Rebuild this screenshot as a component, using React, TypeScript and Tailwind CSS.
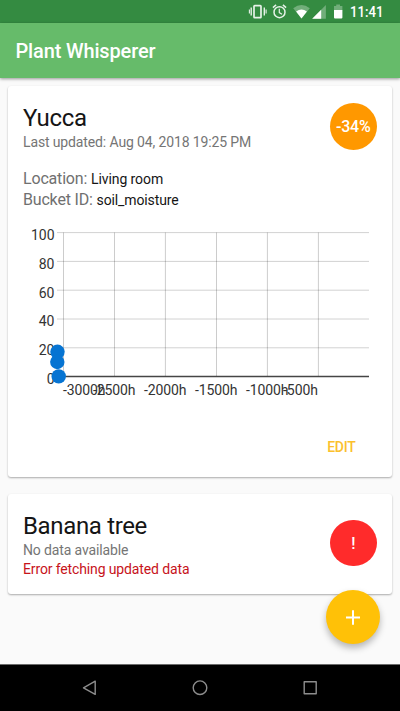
const rows = [
  { label: "100", y: 12.6 },
  { label: "80", y: 41.4 },
  { label: "60", y: 70.2 },
  { label: "40", y: 99 },
  { label: "20", y: 127.8 },
  { label: "0", y: 156.5 },
];
const columns = [
  { label: "-3000h", x: 63.5, start: 63, width: 42.5 },
  { label: "-2500h", x: 114.5, start: 93, width: 42.5 },
  { label: "-2000h", x: 165.4, start: 144, width: 42.5 },
  { label: "-1500h", x: 216.5, start: 195, width: 42.5 },
  { label: "-1000h", x: 267.4, start: 246, width: 42.5 },
  { label: "-500h", x: 318.4, start: 283, width: 35 },
];
const points = [
  { x: 57.5, y: 131.8 },
  { x: 57.3, y: 142 },
  { x: 58.7, y: 156.4 },
];

function MoistureChart() {
  return (
    <svg width="384" height="190" viewBox="8 0 384 190" className="block" fontSize="14" fill="#333">
      {rows.map((r) => (
        <line key={r.label} x1="57" x2="369" y1={r.y} y2={r.y} stroke={r.label === "0" ? "#454545" : "#d2d2d2"} strokeWidth={r.label === "0" ? 1.4 : 1} />
      ))}
      {columns.map((c) => (
        <line key={c.label} x1={c.x} x2={c.x} y1="12.5" y2="156" stroke="#000" strokeOpacity=".2" />
      ))}
      {rows.map((r) => (
        <text key={r.label} x="54.5" y={r.y + 7.3} textAnchor="end">{r.label}</text>
      ))}
      {columns.map((c) => (
        <text key={c.label} x={c.start} y="175.3" textLength={c.width}>{c.label}</text>
      ))}
      {points.map((p) => (
        <circle key={p.y} cx={p.x} cy={p.y} r="7.2" fill="#0674d2" />
      ))}
    </svg>
  );
}

function StatusBar() {
  return (
    <div className="h-[23px] bg-[#348b41]">
      <svg width="400" height="23" viewBox="0 0 400 23" className="block" fill="#fff">
        <g fill="none" stroke="#e6f2e8">
          <rect x="254" y="5.6" width="7" height="12" rx=".7" strokeWidth="1.7" />
          <path d="M251.2 7.6v8M264.3 7.6v8" strokeWidth="1.4" />
          <path d="M249.4 9.6v4M266.1 9.6v4" strokeWidth="1.1" />
          <circle cx="279.5" cy="12.2" r="5.5" strokeWidth="1.5" />
          <path d="M279.3 8.8v3.8l2.7 1.6" strokeWidth="1.2" />
          <path d="M272.9 7.6l3.2-2.7M286.1 7.6l-3.2-2.7" strokeWidth="1.5" />
        </g>
        <path d="M293.2 8.2Q301.5 1.8 309.8 8.2L301.5 18.4Z" fillOpacity=".3" />
        <path d="M296.1 11.5Q301.5 7.4 306.9 11.5L301.5 18.4Z" />
        <path d="M325.9 5v13.7h-13.7Z" fillOpacity=".3" />
        <path d="M321.2 9.8v8.9h-9Z" />
        <path d="M334 6h2.2V4.5h3.8V6h2.4v4.2H334Z" fillOpacity=".3" />
        <path d="M334 10.1h8.4v7.5q0 1-1 1h-6.4q-1 0-1-1Z" />
        <text x="350.1" y="17" fontSize="14" fontWeight="500" textLength="33.5" lengthAdjust="spacingAndGlyphs">11:41</text>
      </svg>
    </div>
  );
}

export default function App() {
  return (
    <div className="flex h-[711px] w-[400px] flex-col overflow-hidden bg-[#fafafa] font-['Roboto',sans-serif] text-[#151515]">
      <StatusBar />
      <header className="relative z-10 flex h-[55px] shrink-0 items-center bg-[#66bb6a] pt-px pl-[15.5px] shadow-[0_1px_3px_rgba(0,0,0,0.4)]">
        <h1 className="text-[20px] leading-6 font-medium tracking-[-0.15px] text-white">Plant Whisperer</h1>
      </header>
      <main className="flex flex-1 flex-col px-2 pt-2">
        <section className="flex h-[391px] flex-col rounded-[3px] bg-white shadow-[0_1px_2px_rgba(0,0,0,0.32)]">
          <div className="flex h-[126px] justify-between pr-[15.5px] pl-[15px]">
            <div className="pt-[18px]">
              <h2 className="text-[24px] leading-7 tracking-[-0.35px]">Yucca</h2>
              <p className="text-[14px] leading-[21px] tracking-[-0.13px] text-[#757575]">Last updated: Aug 04, 2018 19:25 PM</p>
              <p className="mt-[15px] h-[21px] text-[14px] leading-[21px] tracking-[-0.08px]"><span className="text-[16px] tracking-[-0.18px] text-[#707070]">Location: </span>Living room</p>
              <p className="h-[21px] text-[14px] leading-[21px] tracking-[-0.12px]"><span className="text-[16px] tracking-[-0.18px] text-[#707070]">Bucket ID: </span>soil_moisture</p>
            </div>
            <div className="mt-[17px] flex size-[46.5px] items-center justify-center rounded-full bg-[#ff9800] pt-px text-[16px] font-medium tracking-[-0.2px] text-white">-34%</div>
          </div>
          <div className="mt-2"><MoistureChart /></div>
          <div className="flex flex-1 items-start justify-end pt-[27px] pr-[36.5px]">
            <button className="text-[14px] leading-5 font-medium tracking-[-0.25px] text-[#fbc02d]">EDIT</button>
          </div>
        </section>
        <section className="mt-[17px] flex h-[100px] justify-between rounded-[3px] bg-white pr-[15.5px] pl-[15px] shadow-[0_1px_2px_rgba(0,0,0,0.32)]">
          <div className="pt-[18px]">
            <h2 className="text-[24px] leading-7 tracking-[-0.35px]">Banana tree</h2>
            <p className="mt-px text-[14px] leading-[19px] tracking-[-0.13px] text-[#757575]">No data available</p>
            <p className="text-[14px] leading-[19px] tracking-[-0.13px] text-[#c7131b]">Error fetching updated data</p>
          </div>
          <div className="mt-[25.8px] flex size-[46.5px] items-center justify-center rounded-full bg-[#ff2b2b] pt-px text-[16px] font-medium text-white">!</div>
        </section>
      </main>
      <button aria-label="Add plant" className="absolute top-[590px] left-[326px] flex size-[54px] items-center justify-center rounded-full bg-[#ffc107] shadow-[0_4px_7px_rgba(0,0,0,0.28)]">
        <svg width="16" height="16" viewBox="0 0 16 16" stroke="#fff" strokeWidth="2"><path d="M1 8.5h14M8 1.3v14.4" /></svg>
      </button>
      <nav className="h-[47px] shrink-0 border-t border-[#6b6b6b] bg-black">
        <svg width="400" height="46" viewBox="0 665 400 46" className="block" fill="none" stroke="#8d8d8d" strokeWidth="1.4" strokeLinejoin="round">
          <path d="M95.2 681.2v13.2L83.5 687.8Z" />
          <circle cx="200" cy="687.7" r="6.8" />
          <rect x="304.2" y="681.8" width="12" height="12" />
        </svg>
      </nav>
    </div>
  );
}
